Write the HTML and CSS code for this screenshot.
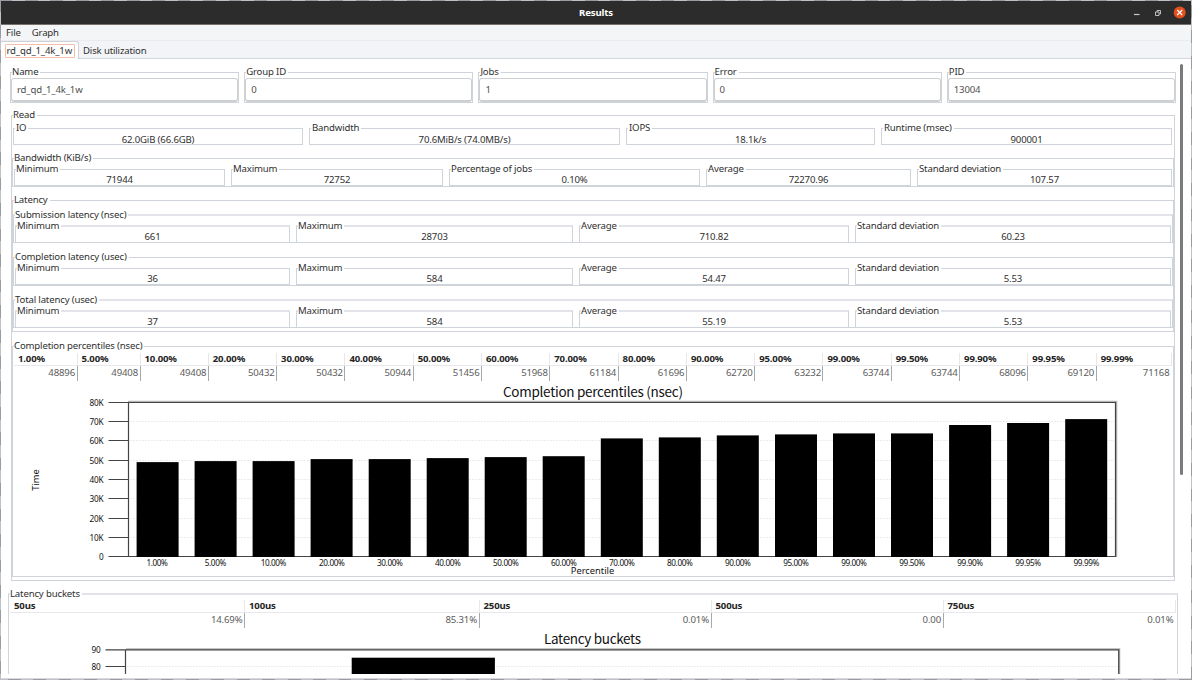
FILE: index.html
```html
<!DOCTYPE html>
<html lang="en">
<head>
<meta charset="utf-8">
<title>Results</title>
<link rel="stylesheet" href="styles.css">
</head>
<body>
<div class="window">
  <header class="titlebar">
    <span class="title">Results</span>
    <svg class="controls" width="56" height="16" viewBox="0 0 56 16">
      <path d="M4 9.500h5.500" stroke="#c8c8c8" stroke-width="1.200"/>
      <path d="M25.500 7h3.500v3.500h-3.500z M27 7V5.500h3.500V9H29" fill="none" stroke="#bdbdbd"/>
      <circle cx="49.700" cy="7.500" r="6" fill="#e2501d"/>
      <path d="M47.200 5l5 5m0-5l-5 5" stroke="#fff" stroke-width="1.200"/>
    </svg>
  </header>
  <nav class="menubar"><span>File</span><span>Graph</span></nav>
  <div class="tabs">
    <div class="tab active"><span>rd_qd_1_4k_1w</span></div>
    <div class="tab">Disk utilization</div>
  </div>
  <div class="view">
    <main class="content">
      <div class="entries">
        <fieldset><legend>Name</legend><div class="entry">rd_qd_1_4k_1w</div></fieldset>
        <fieldset><legend>Group ID</legend><div class="entry">0</div></fieldset>
        <fieldset><legend>Jobs</legend><div class="entry">1</div></fieldset>
        <fieldset><legend>Error</legend><div class="entry">0</div></fieldset>
        <fieldset><legend>PID</legend><div class="entry">13004</div></fieldset>
      </div>
      <fieldset class="read">
        <legend>Read</legend>
        <div class="stats overview">
          <fieldset><legend>IO</legend><p>62.0GiB (66.6GB)</p></fieldset>
          <fieldset><legend>Bandwidth</legend><p>70.6MiB/s (74.0MB/s)</p></fieldset>
          <fieldset><legend>IOPS</legend><p>18.1k/s</p></fieldset>
          <fieldset><legend>Runtime (msec)</legend><p>900001</p></fieldset>
        </div>
        <fieldset class="bandwidth">
          <legend>Bandwidth (KiB/s)</legend>
          <div class="stats five">
            <fieldset><legend>Minimum</legend><p>71944</p></fieldset>
            <fieldset><legend>Maximum</legend><p>72752</p></fieldset>
            <fieldset><legend>Percentage of jobs</legend><p>0.10%</p></fieldset>
            <fieldset><legend>Average</legend><p>72270.96</p></fieldset>
            <fieldset><legend>Standard deviation</legend><p>107.57</p></fieldset>
          </div>
        </fieldset>
        <fieldset class="latency">
          <legend>Latency</legend>
          <fieldset class="group soft">
            <legend>Submission latency (nsec)</legend>
            <div class="stats four">
              <fieldset class="soft"><legend>Minimum</legend><p>661</p></fieldset>
              <fieldset class="soft"><legend>Maximum</legend><p>28703</p></fieldset>
              <fieldset class="soft"><legend>Average</legend><p>710.82</p></fieldset>
              <fieldset class="soft"><legend>Standard deviation</legend><p>60.23</p></fieldset>
            </div>
          </fieldset>
          <fieldset class="group">
            <legend>Completion latency (usec)</legend>
            <div class="stats four">
              <fieldset><legend>Minimum</legend><p>36</p></fieldset>
              <fieldset><legend>Maximum</legend><p>584</p></fieldset>
              <fieldset><legend>Average</legend><p>54.47</p></fieldset>
              <fieldset><legend>Standard deviation</legend><p>5.53</p></fieldset>
            </div>
          </fieldset>
          <fieldset class="group soft">
            <legend>Total latency (usec)</legend>
            <div class="stats four">
              <fieldset class="soft"><legend>Minimum</legend><p>37</p></fieldset>
              <fieldset class="soft"><legend>Maximum</legend><p>584</p></fieldset>
              <fieldset class="soft"><legend>Average</legend><p>55.19</p></fieldset>
              <fieldset class="soft"><legend>Standard deviation</legend><p>5.53</p></fieldset>
            </div>
          </fieldset>
        </fieldset>
        <fieldset class="percentiles">
          <legend>Completion percentiles (nsec)</legend>
          <div class="list list-percentiles">
            <div><b>1.00%</b><i>48896</i></div>
            <div><b>5.00%</b><i>49408</i></div>
            <div><b>10.00%</b><i>49408</i></div>
            <div><b>20.00%</b><i>50432</i></div>
            <div><b>30.00%</b><i>50432</i></div>
            <div><b>40.00%</b><i>50944</i></div>
            <div><b>50.00%</b><i>51456</i></div>
            <div><b>60.00%</b><i>51968</i></div>
            <div><b>70.00%</b><i>61184</i></div>
            <div><b>80.00%</b><i>61696</i></div>
            <div><b>90.00%</b><i>62720</i></div>
            <div><b>95.00%</b><i>63232</i></div>
            <div><b>99.00%</b><i>63744</i></div>
            <div><b>99.50%</b><i>63744</i></div>
            <div><b>99.90%</b><i>68096</i></div>
            <div><b>99.95%</b><i>69120</i></div>
            <div><b>99.99%</b><i>71168</i></div>
          </div>
          <svg class="chart" width="1160" height="195" viewBox="13 381 1160 195">
            <text class="chart-title" x="593" y="396.500" textLength="180">Completion percentiles (nsec)</text>
            <path class="grid" d="M130 421.500H1114M130 440.500H1114M130 460.500H1114M130 479.500H1114M130 498.500H1114M130 518.500H1114M130 537.500H1114"/>
            <path class="shade" d="M128 401.500H1116.500V557"/>
            <path class="axis" d="M108.500 402.500H1115.500V556.500H108.500M128.500 402V557M108.500 421.500h20M108.500 440.500h20M108.500 460.500h20M108.500 479.500h20M108.500 498.500h20M108.500 518.500h20M108.500 537.500h20"/>
            <g class="bars">
              <rect x="136.600" y="462.100" width="42" height="94.900"/>
              <rect x="194.600" y="461.100" width="42" height="95.900"/>
              <rect x="252.600" y="461.100" width="42" height="95.900"/>
              <rect x="310.600" y="459.100" width="42" height="97.900"/>
              <rect x="368.700" y="459.100" width="42" height="97.900"/>
              <rect x="426.700" y="458.100" width="42" height="98.900"/>
              <rect x="484.700" y="457.100" width="42" height="99.900"/>
              <rect x="542.700" y="456.200" width="42" height="100.800"/>
              <rect x="600.800" y="438.400" width="42" height="118.600"/>
              <rect x="658.800" y="437.400" width="42" height="119.600"/>
              <rect x="716.800" y="435.400" width="42" height="121.600"/>
              <rect x="775" y="434.400" width="42" height="122.600"/>
              <rect x="833" y="433.400" width="42" height="123.600"/>
              <rect x="891" y="433.400" width="42" height="123.600"/>
              <rect x="949.100" y="425" width="42" height="132"/>
              <rect x="1007.100" y="423" width="42" height="134"/>
              <rect x="1065.200" y="419.100" width="42" height="137.900"/>
            </g>
            <g class="ylabels">
              <text x="103.500" y="405.500">80K</text><text x="103.500" y="425">70K</text>
              <text x="103.500" y="444">60K</text><text x="103.500" y="463.500">50K</text>
              <text x="103.500" y="483">40K</text><text x="103.500" y="502">30K</text>
              <text x="103.500" y="521.500">20K</text><text x="103.500" y="541">10K</text>
              <text x="103.500" y="560">0</text>
            </g>
            <g class="xlabels">
              <text x="157" y="566">1.00%</text><text x="215.300" y="566">5.00%</text>
              <text x="273.300" y="566">10.00%</text><text x="331.700" y="566">20.00%</text>
              <text x="389.700" y="566">30.00%</text><text x="447.700" y="566">40.00%</text>
              <text x="505.700" y="566">50.00%</text><text x="563.700" y="566">60.00%</text>
              <text x="621.700" y="566">70.00%</text><text x="679.700" y="566">80.00%</text>
              <text x="737.700" y="566">90.00%</text><text x="795.800" y="566">95.00%</text>
              <text x="853.800" y="566">99.00%</text><text x="912" y="566">99.50%</text>
              <text x="970" y="566">99.90%</text><text x="1028" y="566">99.95%</text>
              <text x="1086.200" y="566">99.99%</text>
            </g>
            <text class="axis-name" x="592.500" y="574">Percentile</text>
            <text class="axis-name" transform="translate(39 480) rotate(-90)">Time</text>
          </svg>
        </fieldset>
      </fieldset>
      <fieldset class="buckets soft">
        <legend>Latency buckets</legend>
        <div class="list list-buckets">
          <div><b>50us</b><i>14.69%</i></div>
          <div><b>100us</b><i>85.31%</i></div>
          <div><b>250us</b><i>0.01%</i></div>
          <div><b>500us</b><i>0.00</i></div>
          <div><b>750us</b><i>0.01%</i></div>
        </div>
        <svg class="chart" width="1167" height="46" viewBox="9 628 1167 46">
          <text class="chart-title" x="592.500" y="644" textLength="97">Latency buckets</text>
          <path class="grid" d="M127 666.500H1118"/>
          <path class="shade" d="M126 649H1119.500V676"/>
          <path class="axis" d="M105.500 649.900H1118.700V676M125.500 650V676M105.500 666.500h20"/>
          <g class="bars"><rect x="351.700" y="657.700" width="143.200" height="17"/></g>
          <g class="ylabels"><text x="100.500" y="653">90</text><text x="100.500" y="670">80</text></g>
        </svg>
      </fieldset>
    </main>
    <div class="scrollbar"></div>
  </div>
</div>
</body>
</html>
```
FILE: styles.css
```css
* { box-sizing: border-box; }

body {
  margin: 0;
  height: 680px;
  padding: 1px;
  overflow: hidden;
  background: repeating-linear-gradient(135deg, #9a9ca2 0 9px, #bfc1c6 9px 18px);
  font: 9.6px/11px "Noto Sans", sans-serif;
  letter-spacing: -0.16px;
  color: #303030;
}

.window {
  width: 1190px;
  height: 678px;
  display: flex;
  flex-direction: column;
  background: #fff;
  border-bottom: 1px solid #d6d8de;
}

.titlebar {
  height: 24px;
  flex: none;
  display: grid;
  grid-template-columns: 1fr auto 1fr;
  align-items: center;
  background: #2c2c2c;
  border-bottom: 1px solid #77716e;
  color: #fff;
  font-weight: bold;
}
.title { grid-column: 2; }
.controls { justify-self: end; margin-right: 5.500px; }

.menubar {
  height: 16px;
  flex: none;
  display: flex;
  gap: 11px;
  padding-left: 5px;
  line-height: 16px;
  background: #f4f5f7;
  border-bottom: 1px solid #e9ebee;
}

.tabs {
  height: 18px;
  flex: none;
  display: flex;
  background: #f3f4f7;
  border-bottom: 1px solid #d3d6da;
}
.tab { padding: 1px 0 0 4px; line-height: 17px; }
.tab.active {
  width: 78px;
  height: 18px;
  padding: 2px 0 0 4px;
  background: #fff;
  border: solid #cfd2d6;
  border-width: 1px 1px 0 0;
  border-radius: 0 3px 0 0;
}
.tab.active span {
  display: block;
  width: 70px;
  height: 14px;
  padding-left: 0.500px;
  line-height: 11px;
  border: 1px solid #f4bda9;
  border-radius: 1px;
}

.view {
  height: 615px;
  display: flex;
  overflow: hidden;
}
.content { width: 1177px; padding: 8px 0 0 7px; flex: none; }
.scrollbar {
  width: 3px;
  height: 411px;
  margin: 5px 0 0 2px;
  background: #7a7a7a;
  border-radius: 2px;
}

fieldset {
  min-width: 0;
  margin: 0;
  padding: 0;
  border: 1px solid #cfd3da;
}
legend {
  height: 11px;
  margin-left: 1px;
  padding: 0 2px 0 0;
  line-height: 10px;
  white-space: nowrap;
}
.soft { border-top: 2px solid #e2e4e9; }
.soft > legend { height: 12px; line-height: 12px; }

.entries {
  display: grid;
  grid-template-columns: repeat(5, 1fr);
  gap: 5px;
  margin: 0 2px;
}
.entry {
  height: 24px;
  padding-left: 5px;
  line-height: 21px;
  border: 1px solid #cdcfd1;
  border-bottom-width: 2px;
  border-radius: 3px;
  color: #505050;
}

.read { margin: 7px 3px 0; padding: 2px 0 3px; }
.stats { display: grid; column-gap: 6px; margin: 0 1px; }
.stats p { margin: 0; line-height: 10px; text-align: center; }
.overview { grid-template-columns: 290px 311px 249px 291px; }
.overview p { line-height: 11px; height: 10px; }
.overview legend { padding-left: 1px; }
.five { grid-template-columns: 211px 212px 251px 205px 255px; }
.four { grid-template-columns: 275px 277px 270px 316px; }
.bandwidth { margin-top: 8px; }
.latency { margin-top: 8px; padding: 3px 0; }
.group + .group { margin-top: 9px; }
.group + .group.soft { margin-top: 8px; }
.group.soft > .stats { margin: -1px 1px; }
.percentiles { margin-top: 9px; height: 236px; }

.list { display: grid; margin: 1px 1px 0; }
.list > div {
  display: grid;
  grid-template-rows: 13px 15px;
  background: linear-gradient(#e8e8ea 0 12px, #a9a9a9 12px) right / 1px 100% no-repeat;
}
.list > div:last-child { background: linear-gradient(#e8e8ea, #e8e8ea) right top / 1px 12px no-repeat; }
.list b {
  padding-left: 4px;
  line-height: 11px;
  border-bottom: 1px solid #e8e8ea;
  color: #242424;
}
.list i {
  padding-right: 2.500px;
  line-height: 14px;
  font-style: normal;
  text-align: right;
  color: #5c5c5c;
}
.list-percentiles { grid-template-columns: 63.500px 63px repeat(14, 68.300px) 1fr; }

.buckets { height: 100px; margin-top: 7px; }
.list-buckets { margin-top: 0; grid-template-columns: 235px 234.500px 232px 232px 1fr; }

.chart { display: block; letter-spacing: 0; }
.chart text { font-family: "Noto Sans", sans-serif; }
.chart .chart-title {
  font: 13.500px "Noto Sans CJK SC", sans-serif;
  text-anchor: middle;
  fill: #111;
}
.grid { fill: none; stroke: #ececec; stroke-dasharray: 2 1; }
.shade { fill: none; stroke: #b5b3b3; stroke-width: 1.500; }
.axis { fill: none; stroke: #444; stroke-width: 1.200; }
.bars rect { fill: #000; }
.ylabels text { font-size: 8.200px; text-anchor: end; fill: #111; letter-spacing: -0.150px; }
.xlabels text { font-size: 8.200px; text-anchor: middle; fill: #111; letter-spacing: -0.400px; }
.chart .axis-name { font-size: 9.300px; text-anchor: middle; fill: #111; }
```
